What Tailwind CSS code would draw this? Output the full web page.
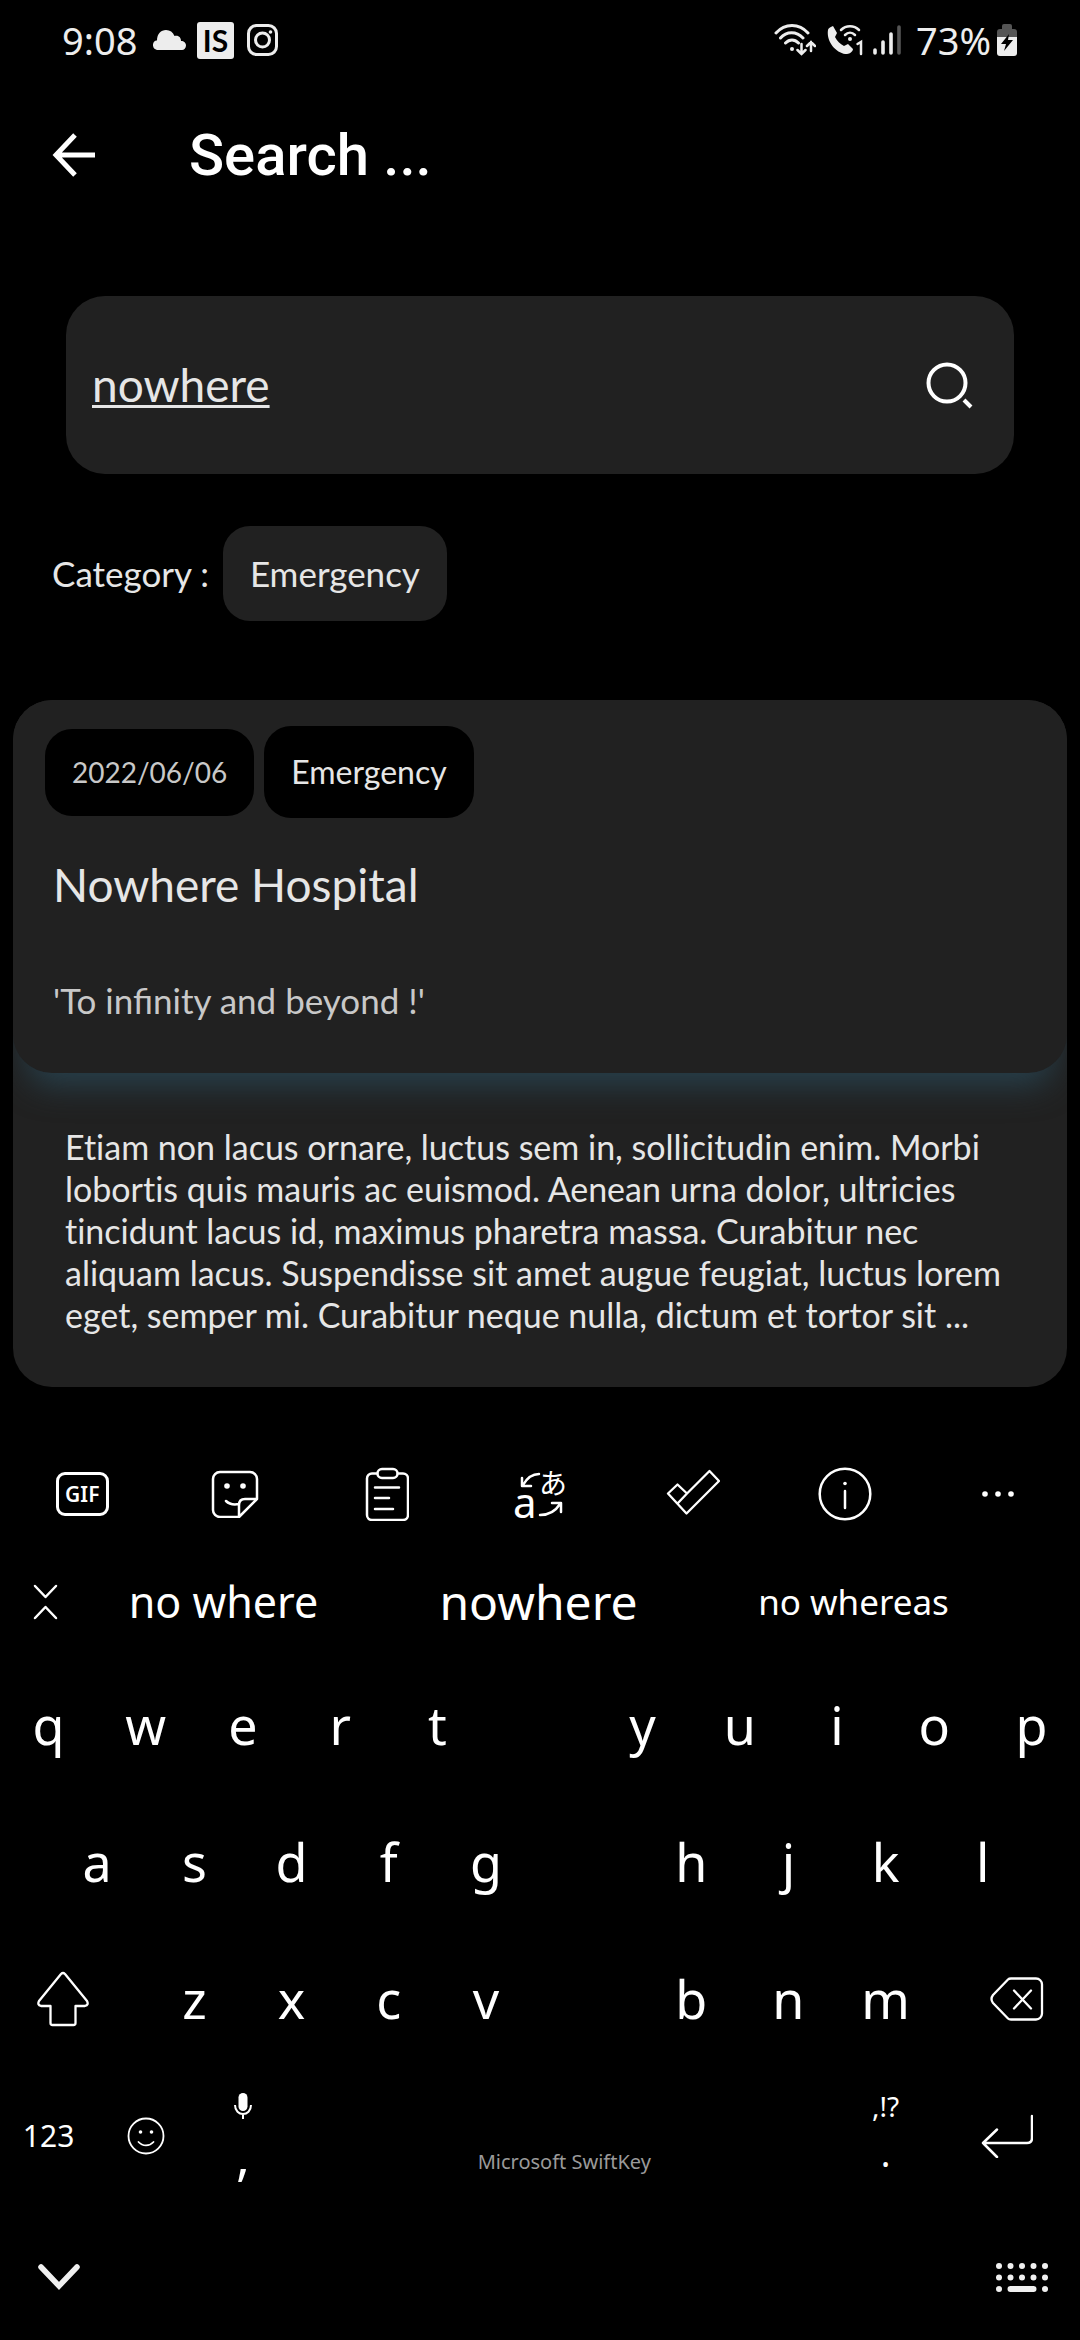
<!DOCTYPE html>
<html lang="en">
<head>
<meta charset="utf-8">
<meta name="viewport" content="width=device-width, initial-scale=1">
<title>Search</title>
<script src="https://cdn.jsdelivr.net/npm/@tailwindcss/browser@4"></script>
</head>
<body class="min-h-screen bg-black font-['Lato',sans-serif] text-[#e6e6e6]">

<!-- Status bar -->
<header class="flex h-20 items-center justify-between pl-[62px] pr-[62px] font-['Noto_Sans',sans-serif] text-[38px] leading-none text-[#ededed]">
  <div class="flex items-center">
    <span class="w-[90px]">9:08</span>
    <svg class="h-5 w-[34px]" viewBox="0 0 34 20" fill="currentColor" aria-hidden="true"><path d="M5 20a5 5 0 0 1-1-9.500h1C5 4 9 0 14 0c4 0 7 2 8.500 6C27 5 29 8 29 11c3 0 5 2 5 4.500S32 20 30 20z"/></svg>
    <span class="ml-[11px] flex h-[37px] w-[37px] items-center justify-center rounded-[3px] bg-[#ededed] font-['Lato',sans-serif] text-[30px] font-bold leading-none text-black">IS</span>
    <svg class="ml-[13px] h-8 w-8" viewBox="0 0 32 32" fill="none" stroke="currentColor" stroke-width="3" aria-hidden="true"><rect x="1.500" y="1.500" width="28" height="29" rx="8"/><circle cx="15.500" cy="16" r="7"/><circle cx="23.500" cy="8" r="1.800" fill="currentColor" stroke="none"/></svg>
  </div>
  <div class="flex items-center">
    <svg class="h-8 w-[42px]" viewBox="0 0 42 32" fill="none" stroke="currentColor" stroke-width="3" stroke-linecap="round" aria-hidden="true"><path d="M2 9C11-1 25-1 34 9M6.500 14c6-7 16-7 22.500 0M11.500 19c4-4 9-4 13 0"/><circle cx="18" cy="25" r="2" fill="currentColor" stroke="none"/><path d="M27.500 20v10m-4-4 4 4 4-4M37 27V18m-4 4 4-4 4 4" stroke-width="2.500"/></svg>
    <svg class="ml-[11px] h-8 w-9" viewBox="0 0 36 32" fill="none" stroke="currentColor" stroke-width="2.500" stroke-linecap="round" aria-hidden="true"><path d="M1 6Q1 4 6 2l4 7-2 4c2 4 5 7 9 9l4-2 5 5c0 2-3 5-6 5C10 30-1 18 1 6z" fill="currentColor" stroke="none"/><path d="M14 6c5-5 13-5 18 0M18 11c3-3 7-3 10 0"/><circle cx="23" cy="15" r="2" fill="currentColor" stroke="none"/><path d="M30.500 20l3.500-2v12"/></svg>
    <svg class="ml-[9px] h-8 w-[30px]" viewBox="0 0 30 32" fill="none" stroke="currentColor" stroke-width="3.600" stroke-linecap="round" aria-hidden="true"><path d="M3 26v3M11 18v11M19 10v19"/><path d="M27 3v26" stroke="#555"/></svg>
    <span class="ml-3.5">73%</span>
    <svg class="ml-[5px] h-[34px] w-[22px]" viewBox="0 0 22 34" aria-hidden="true"><path d="M6 3a2 2 0 0 1 2-2h6a2 2 0 0 1 2 2v3h2a3 3 0 0 1 3 3v6H1V9a3 3 0 0 1 3-3h2z" fill="#555"/><path d="M1 14h20v16a3 3 0 0 1-3 3H4a3 3 0 0 1-3-3z" fill="#ededed"/><path d="M13 11 5 21h5l-2 7 9-11h-5z" fill="#000"/></svg>
  </div>
</header>

<!-- App bar -->
<nav class="flex h-[150px] items-center pl-[52px]">
  <button type="button" aria-label="Back" class="text-white"><svg class="h-11 w-11" viewBox="0 0 44 44" fill="none" stroke="currentColor" stroke-width="5" aria-hidden="true"><path d="M43 22H5M23 2 4 22l19 20"/></svg></button>
  <h1 class="ml-[93px] font-['Roboto',sans-serif] text-[58px] font-medium leading-[68px] text-white">Search ...</h1>
</nav>

<main>
  <form class="mx-[66px] mt-[66px] flex h-[178px] items-center rounded-[39px] bg-[#212121] pl-[26px] pr-[41px]">
    <input type="text" aria-label="Search" value="nowhere" class="h-16 min-w-0 flex-1 bg-transparent pb-0.5 text-[46px] leading-[56px] underline decoration-[3px] underline-offset-[3px] outline-none">
    <button type="button" aria-label="Run search" class="text-white"><svg class="h-12 w-12" viewBox="0 0 48 48" fill="none" stroke="currentColor" stroke-width="4" aria-hidden="true"><circle cx="22" cy="22" r="18.500"/><path d="m39 39 7 7"/></svg></button>
  </form>

  <div class="mt-[52px] flex items-center pl-[52px] text-[35px] leading-[41px]">
    <span>Category :</span>
    <button type="button" class="ml-3.5 rounded-[27px] bg-[#212121] px-[27px] py-[27px]">Emergency</button>
  </div>

  <!-- Result card -->
  <article class="mx-[13px] mt-[79px] overflow-hidden rounded-[39px] bg-[#212121]">
    <div class="rounded-[39px] bg-[#212121] pb-[52px] pt-[26px] shadow-[0_26px_32px_-14px_#28414d]">
      <div class="flex items-center gap-2.5 pl-8">
        <time datetime="2022-06-06" class="rounded-[27px] bg-black px-[27px] py-[25px] text-[28px] leading-[37px] text-[#c8c8c8]">2022/06/06</time>
        <span class="rounded-[27px] bg-black px-[27px] py-[27px] text-[32px] leading-[38px]">Emergency</span>
      </div>
      <h2 class="ml-10 mt-[39px] text-[46px] leading-[56px]">Nowhere Hospital</h2>
      <p class="ml-10 mt-[66px] text-[35px] leading-[42px] text-[#c8c8c8]">'To infinity and beyond !'</p>
    </div>
    <p class="pb-[51px] pl-[52px] pr-[46px] pt-[53px] text-[34px] leading-[42px] [font-variant-ligatures:none]">Etiam non lacus ornare, luctus sem in, sollicitudin enim. Morbi lobortis quis mauris ac euismod. Aenean urna dolor, ultricies tincidunt lacus id, maximus pharetra massa. Curabitur nec aliquam lacus. Suspendisse sit amet augue feugiat, luctus lorem eget, semper mi. Curabitur neque nulla, dictum et tortor sit ...</p>
  </article>
</main>

<!-- Keyboard -->
<section aria-label="Keyboard" class="mt-[53px] font-['Noto_Sans','Noto_Sans_CJK_JP',sans-serif] text-white">
  <div class="grid h-[108px] grid-cols-7 px-1.5">
    <button type="button" aria-label="GIF" class="flex items-center justify-center"><span class="flex h-[44px] w-[53px] items-center justify-center rounded-[9px] border-[3px] border-white text-[21px] font-semibold leading-none">GIF</span></button>
    <button type="button" aria-label="Stickers" class="flex items-center justify-center"><svg class="h-12 w-12" viewBox="0 0 48 48" fill="none" stroke="currentColor" stroke-width="2.500" stroke-linecap="round" stroke-linejoin="round" aria-hidden="true"><path d="M28 47H9a7 7 0 0 1-7-7V9a7 7 0 0 1 7-7h30a7 7 0 0 1 7 7v20L28 47V35c0-4 2-6 6-6h12M15 31c3 3 8 4 13 3"/><circle cx="16" cy="16" r="2.800" fill="currentColor" stroke="none"/><circle cx="32" cy="16" r="2.800" fill="currentColor" stroke="none"/></svg></button>
    <button type="button" aria-label="Clipboard" class="flex items-center justify-center"><svg class="h-[54px] w-11" viewBox="0 0 44 54" fill="none" stroke="currentColor" stroke-width="2.500" stroke-linecap="round" stroke-linejoin="round" aria-hidden="true"><path d="M12 6.500H7a5 5 0 0 0-5 5V48a5 5 0 0 0 5 5h31a5 5 0 0 0 5-5V11.500a5 5 0 0 0-5-5h-5"/><rect x="12.500" y="2" width="20" height="9" rx="4.500"/><path d="M10 20.500h24M10 31h14M10 42h18"/></svg></button>
    <button type="button" aria-label="Translate" class="flex items-center justify-center">
      <span class="relative block h-[54px] w-[54px] leading-none">
        <span class="absolute bottom-0 left-0 text-[42px] leading-[38px]">a</span>
        <span class="absolute right-0 top-0 font-['Noto_Sans_CJK_JP',sans-serif] text-[28px] leading-[30px]">あ</span>
        <svg class="absolute inset-0 h-full w-full" viewBox="0 0 54 54" fill="none" stroke="currentColor" stroke-width="2.500" stroke-linecap="round" stroke-linejoin="round" aria-hidden="true"><path d="M9 11v8h9M10 18c4-7 9-11 16-11M39 36h9v9M47 37c-5 8-12 11-20 11"/></svg>
      </span>
    </button>
    <button type="button" aria-label="Tasks" class="flex items-center justify-center"><svg class="h-[54px] w-[54px]" viewBox="0 0 54 54" fill="none" stroke="currentColor" stroke-width="2.300" stroke-linejoin="round" aria-hidden="true"><path d="M2 26.500 11.500 17.500 21 26.500 43.500 4 53 14 20.500 46.500zM21 26.500 11.500 36.500"/></svg></button>
    <button type="button" aria-label="Information" class="flex items-center justify-center"><svg class="h-[54px] w-[54px]" viewBox="0 0 54 54" fill="none" stroke="currentColor" stroke-width="2.500" stroke-linecap="round" aria-hidden="true"><circle cx="27" cy="27" r="25.300"/><path d="M27 24v17"/><circle cx="27" cy="16.500" r="1.800" fill="currentColor" stroke="none"/></svg></button>
    <button type="button" aria-label="More" class="flex items-center justify-center"><svg class="h-2 w-8" viewBox="0 0 32 8" fill="currentColor" aria-hidden="true"><circle cx="3" cy="4" r="2.800"/><circle cx="16" cy="4" r="2.800"/><circle cx="29" cy="4" r="2.800"/></svg></button>
  </div>

  <div class="flex h-[108px] items-center pr-[69px]">
    <button type="button" aria-label="Resize keyboard" class="w-[66px] pl-[33px]"><svg class="h-9 w-[25px]" viewBox="0 0 25 36" fill="none" stroke="currentColor" stroke-width="2.500" stroke-linecap="round" stroke-linejoin="round" aria-hidden="true"><path d="m2 2 10.500 11L23 2M2 34l10.500-11L23 34"/></svg></button>
    <div class="grid flex-1 grid-cols-3 items-center">
      <button type="button" class="text-[43px]">no where</button>
      <button type="button" class="text-[48px]">nowhere</button>
      <button type="button" class="text-[35px]">no whereas</button>
    </div>
  </div>

  <div class="flex h-[137px] text-[52px]">
    <button type="button" class="flex-1">q</button><button type="button" class="flex-1">w</button><button type="button" class="flex-1">e</button><button type="button" class="flex-1">r</button><button type="button" class="mr-[10%] flex-1">t</button><button type="button" class="flex-1">y</button><button type="button" class="flex-1">u</button><button type="button" class="flex-1">i</button><button type="button" class="flex-1">o</button><button type="button" class="flex-1">p</button>
  </div>
  <div class="flex h-[137px] px-[4.500%] text-[52px]">
    <button type="button" class="flex-1">a</button><button type="button" class="flex-1">s</button><button type="button" class="flex-1">d</button><button type="button" class="flex-1">f</button><button type="button" class="mr-[11%] flex-1">g</button><button type="button" class="flex-1">h</button><button type="button" class="flex-1">j</button><button type="button" class="flex-1">k</button><button type="button" class="flex-1">l</button>
  </div>
  <div class="flex h-[137px] text-[52px]">
    <button type="button" aria-label="Shift" class="flex w-[13.5%] items-center justify-center pr-5"><svg class="h-14 w-[52px]" viewBox="0 0 52 56" fill="none" stroke="currentColor" stroke-width="2.300" stroke-linejoin="round" aria-hidden="true"><path d="M24 3q2-2 4 0L50 30q2 4-2 5H38.500v17q0 2-2 2h-21q-2 0-2-2V35H4q-4-1-2-5z"/></svg></button>
    <button type="button" class="flex-1">z</button><button type="button" class="flex-1">x</button><button type="button" class="flex-1">c</button><button type="button" class="mr-[10%] flex-1">v</button><button type="button" class="flex-1">b</button><button type="button" class="flex-1">n</button><button type="button" class="flex-1">m</button>
    <button type="button" aria-label="Backspace" class="flex w-[13.5%] items-center justify-center pl-5"><svg class="h-11 w-[54px]" viewBox="0 0 54 44" fill="none" stroke="currentColor" stroke-width="2.300" stroke-linecap="round" stroke-linejoin="round" aria-hidden="true"><path d="M21 1.500h25a6 6 0 0 1 6 6v29a6 6 0 0 1-6 6H21q-2 0-3-1L3 26q-3-4 0-8L18 2.500q1-1 3-1zM24 13.500l17 18M41 13.500l-17 18"/></svg></button>
  </div>
  <div class="flex h-[137px]">
    <button type="button" class="w-[9%] text-[30px]">123</button>
    <button type="button" aria-label="Emoji" class="flex w-[9%] items-center justify-center"><svg class="h-[38px] w-[38px]" viewBox="0 0 38 38" fill="none" stroke="currentColor" stroke-width="1.800" stroke-linecap="round" aria-hidden="true"><circle cx="19" cy="19" r="17.500"/><path d="M11.500 25c4 4.500 11 4.500 15 0"/><circle cx="13.500" cy="15" r="1.800" fill="currentColor" stroke="none"/><circle cx="24.500" cy="15" r="1.800" fill="currentColor" stroke="none"/></svg></button>
    <button type="button" aria-label="Comma" class="flex w-[9%] flex-col items-center pt-[26px]"><svg class="h-[26px] w-5" viewBox="0 0 20 26" fill="none" stroke="currentColor" stroke-width="2" aria-hidden="true"><rect x="5.500" y="0" width="9" height="18" rx="4.500" fill="currentColor" stroke="none"/><path d="M2 12c0 12 16 12 16 0M10 21v5"/></svg><span class="text-[52px] leading-[72px]">,</span></button>
    <button type="button" class="flex-1 pt-[52px] text-[20px] text-[#9a9a9a]">Microsoft SwiftKey</button>
    <button type="button" class="flex w-[9%] flex-col items-center pt-[20px]"><span class="text-[28px] leading-[38px]">,!?</span><span class="text-[36px] leading-[58px]">.</span></button>
    <button type="button" aria-label="Enter" class="flex w-[13.5%] items-center justify-center"><svg class="h-11 w-[52px]" viewBox="0 0 52 44" fill="none" stroke="currentColor" stroke-width="2.500" stroke-linecap="round" stroke-linejoin="round" aria-hidden="true"><path d="M51 2v22q0 5-5 5H2M16 15.500 2 29l14 14"/></svg></button>
  </div>
  <div class="flex items-center justify-between pb-11 pl-[37px] pr-[31px] pt-[58px] text-[#f0f0f0]">
    <button type="button" aria-label="Hide keyboard"><svg class="h-7 w-11" viewBox="0 0 44 28" fill="none" stroke="currentColor" stroke-width="5.500" stroke-linecap="round" aria-hidden="true"><path d="m4 4 18 19L40 4"/></svg></button>
    <button type="button" aria-label="Switch keyboard"><svg class="h-[30px] w-[54px]" viewBox="0 0 54 30" fill="none" stroke="currentColor" stroke-width="6" stroke-linecap="round" aria-hidden="true"><path d="M4 4h.01M15.500 4h.01M27 4h.01M38.500 4h.01M50 4h.01M4 15.500h.01M15.500 15.500h.01M27 15.500h.01M38.500 15.500h.01M50 15.500h.01M4 27h.01M15.500 27h23M50 27h.01"/></svg></button>
  </div>
</section>
</body>
</html>
